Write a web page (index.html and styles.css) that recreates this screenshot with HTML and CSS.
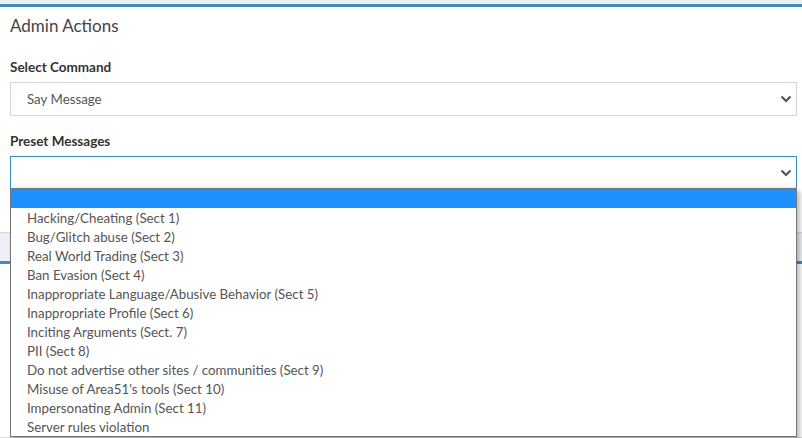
FILE: index.html
```html
<!DOCTYPE html>
<html lang="en">
<head>
<meta charset="UTF-8">
<meta name="viewport" content="width=device-width, initial-scale=1.0">
<title>Admin Actions</title>
<link rel="stylesheet" href="styles.css">
</head>
<body>

<div class="box">
  <div class="box-header">
    <h3 class="box-title">Admin Actions</h3>
  </div>
  <div class="box-body">
    <div class="form-group">
      <label>Select Command</label>
      <div class="select">
        <span>Say Message</span>
        <svg class="chevron" width="12" height="8" viewBox="0 0 12 8"><path d="M1.5 1.5 L6 6 L10.5 1.5" fill="none" stroke="#555" stroke-width="2.2"/></svg>
      </div>
    </div>
    <div class="form-group preset">
      <label>Preset Messages</label>
      <div class="select focused">
        <span></span>
        <svg class="chevron" width="12" height="8" viewBox="0 0 12 8"><path d="M1.5 1.5 L6 6 L10.5 1.5" fill="none" stroke="#555" stroke-width="2.2"/></svg>
      </div>
      <ul class="dropdown">
        <li class="selected">&nbsp;</li>
        <li>Hacking/Cheating (Sect 1)</li>
        <li>Bug/Glitch abuse (Sect 2)</li>
        <li>Real World Trading (Sect 3)</li>
        <li>Ban Evasion (Sect 4)</li>
        <li>Inappropriate Language/Abusive Behavior (Sect 5)</li>
        <li>Inappropriate Profile (Sect 6)</li>
        <li>Inciting Arguments (Sect. 7)</li>
        <li>PII (Sect 8)</li>
        <li>Do not advertise other sites / communities (Sect 9)</li>
        <li>Misuse of Area51's tools (Sect 10)</li>
        <li>Impersonating Admin (Sect 11)</li>
        <li>Server rules violation</li>
      </ul>
    </div>
  </div>
</div>

<div class="box next"></div>

</body>
</html>
```

FILE: styles.css
```css
html,
body {
  height: 438px;
  overflow: hidden;
}

body {
  font-family: Lato, "Open Sans", sans-serif;
  background-color: #ecf0f5;
  margin: 0;
  padding: 4px 0 0;
  box-sizing: border-box;
  color: #333;
}

.box {
  background: #fff;
  border-top: 3px solid #3c8dbc;
  box-shadow: 0 1px 1px rgba(0, 0, 0, 0.1);
}

.box.next {
  margin-top: 29px;
  height: 173px;
}

.box-header {
  padding: 7px 10px 10px;
}

.box-title {
  margin: 0;
  font-size: 17px;
  font-weight: 400;
  color: #444;
  line-height: 24px;
}

.box-body {
  padding: 10px 5px 42px 10px;
}

.form-group {
  margin-bottom: 16px;
}

.form-group.preset {
  position: relative;
  margin-bottom: 0;
}

label {
  display: block;
  font-size: 13.5px;
  font-weight: 700;
  color: #333;
  line-height: 18px;
  margin-bottom: 6px;
}

.select {
  height: 34px;
  box-sizing: border-box;
  border: 1px solid #d2d6de;
  display: flex;
  align-items: center;
  justify-content: space-between;
  padding: 0 4px 0 16px;
  font-size: 13.3px;
  color: #555;
}

.select.focused {
  border-color: #3c8dbc;
  box-shadow: inset 0 -6px 8px -6px rgba(0, 0, 0, 0.12);
}

.chevron {
  display: block;
}

.dropdown {
  position: absolute;
  top: 56px;
  left: 0;
  right: 0;
  margin: 0;
  padding: 0;
  list-style: none;
  background: #fff;
  border: 1px solid #767676;
  box-shadow: 3px 3px 4px rgba(0, 0, 0, 0.25);
}

.dropdown li {
  height: 18px;
  padding-top: 1px;
  line-height: 18px;
  font-size: 13.3px;
  color: #555;
  padding-left: 16px;
}

.dropdown li.selected {
  background: #1e90ff;
}
```
